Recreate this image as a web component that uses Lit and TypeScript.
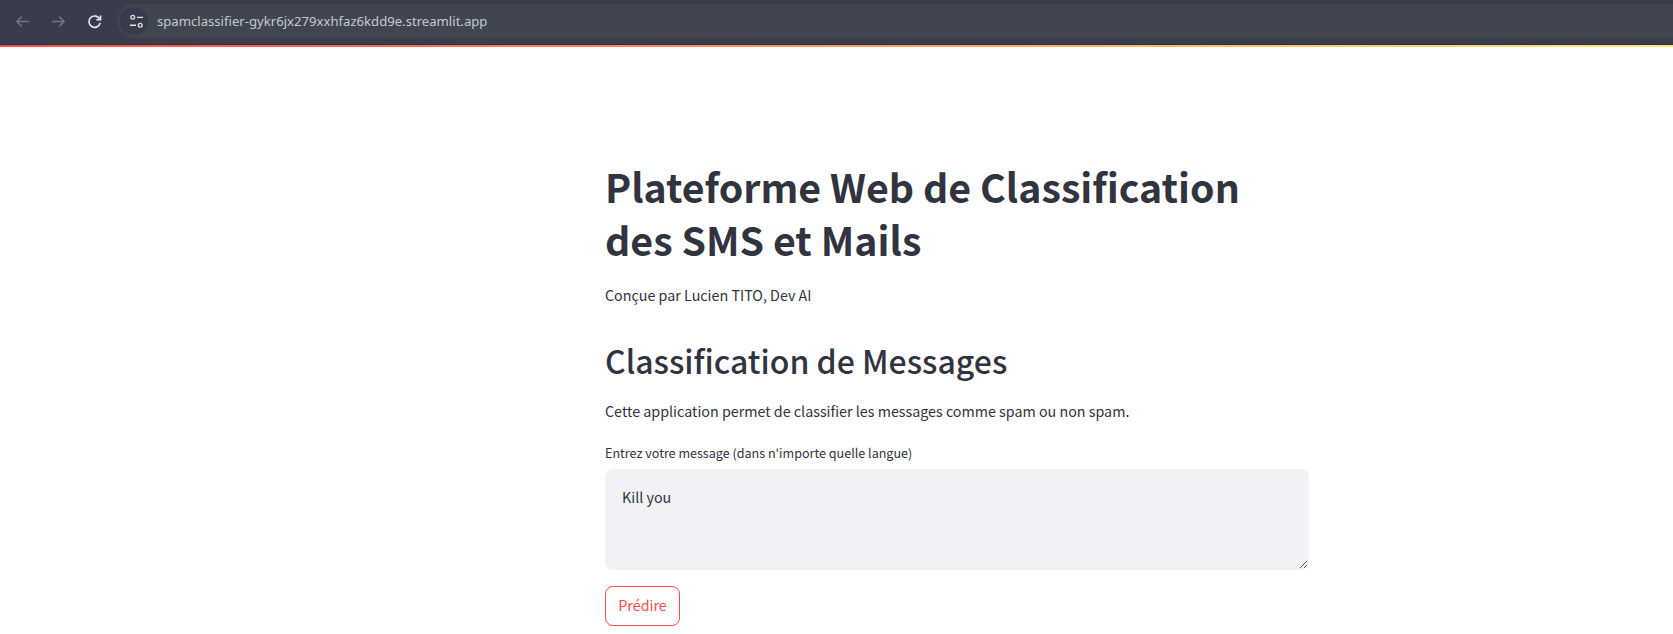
import { LitElement, html, css } from "lit";
import { customElement } from "lit/decorators.js";

@customElement("app-root")
export class AppRoot extends LitElement {
  static styles = css`
    :host { display: block; height: 634px; background: #fff; overflow: hidden; font-family: "Noto Sans CJK SC", "Noto Sans", sans-serif; color: #31333f; }
    * { box-sizing: border-box; }
    .chrome { height: 45px; background: #393c4b; padding: 4px 0 0 4px; display: flex; align-items: flex-start; border-bottom: 1px solid #2e303c; }
    .nav { width: 36px; height: 34px; display: flex; align-items: center; justify-content: center; flex: none; }
    .nav svg { width: 17px; height: 17px; }
    .omni { flex: 1; margin-left: 5px; height: 34px; background: #40454f; border-radius: 17px 0 0 17px; display: flex; align-items: center; padding-left: 3px; color: #c3cad6; font-family: "Noto Sans", sans-serif; font-size: 13.13px; }
    .site { width: 28px; height: 28px; border-radius: 50%; background: #383b49; display: flex; align-items: center; justify-content: center; padding-left: 4px; margin-right: 9px; }
    .site svg { width: 15px; height: 15px; flex: none; }
    .accent { height: 2px; background: linear-gradient(90deg, #ff4b4b, #ffe67c); }
    main { width: 704px; margin-left: 605px; padding-top: 112px; }
    h1 { margin: 0; font-size: 39.3px; line-height: 53px; font-weight: 700; }
    p { margin: 0; font-size: 14.3px; line-height: 24px; }
    .by { margin-top: 18px; }
    h2 { margin: 31px 0 0; font-size: 32px; line-height: 44px; font-weight: 500; }
    .desc { margin-top: 17px; }
    label { display: block; margin-top: 21px; font-size: 12.57px; line-height: 18px; }
    .ta { position: relative; margin-top: 7px; height: 101px; background: #f0f2f6; border-radius: 8px; padding: 16px 17px; font-size: 14.3px; line-height: 24px; }
    .grip { position: absolute; right: 2px; bottom: 2px; width: 8px; height: 8px; }
    button { display: block; margin-top: 16px; width: 75px; height: 40px; background: #fff; border: 1px solid #ff4b4b; border-radius: 8px; color: #ff4b4b; font: inherit; font-size: 14.3px; line-height: 36px; padding: 0 0 2px; }
  `;
  render() {
    return html`
      <div class="chrome">
        <div class="nav"><svg viewBox="0 0 24 24" fill="none" stroke="#727784" stroke-width="2"><path d="M21 12H4M11 5l-7 7 7 7"/></svg></div>
        <div class="nav"><svg viewBox="0 0 24 24" fill="none" stroke="#727784" stroke-width="2"><path d="M3 12h17M13 5l7 7-7 7"/></svg></div>
        <div class="nav"><svg viewBox="0 0 24 24" fill="none" stroke="#e3e6ec" stroke-width="2.4"><path d="M19.5 9A8 8 0 1 0 20 14"/><path d="M20.5 3.5V9.500H14.500"/></svg></div>
        <div class="omni">
          <div class="site"><svg viewBox="0 0 16 16" fill="none" stroke="#dfe3ea" stroke-width="1.4"><circle cx="4" cy="3.500" r="2"/><path d="M8.500 3.500H15M1 12H7.500"/><circle cx="12" cy="12" r="2"/></svg></div>
          <span>spamclassifier-gykr6jx279xxhfaz6kdd9e.streamlit.app</span>
        </div>
      </div>
      <div class="accent"></div>
      <main>
        <h1>Plateforme Web de Classification<br />des SMS et Mails</h1>
        <p class="by">Conçue par Lucien TITO, Dev AI</p>
        <h2>Classification de Messages</h2>
        <p class="desc">Cette application permet de classifier les messages comme spam ou non spam.</p>
        <label>Entrez votre message (dans n'importe quelle langue)</label>
        <div class="ta">Kill you
          <svg class="grip" viewBox="0 0 8 8" stroke="#555" stroke-width="1"><path d="M1 8L8 1M5 8L8 5"/></svg>
        </div>
        <button>Prédire</button>
      </main>
    `;
  }
}
